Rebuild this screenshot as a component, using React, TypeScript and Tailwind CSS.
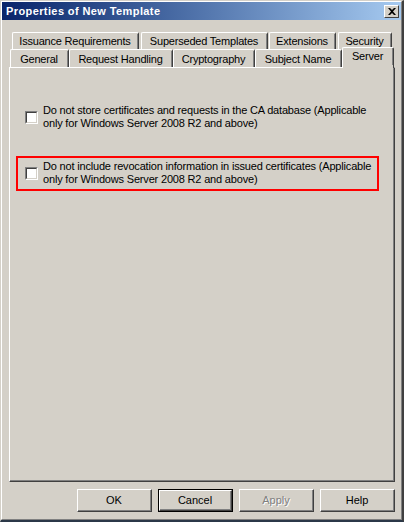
import React from 'react';

const font = { fontFamily: '"Liberation Sans", Arial, sans-serif' };

function Tab({ label, width, selected = false }: { label: string; width: string; selected?: boolean }) {
  return (
    <div
      className={`${width} ${selected ? 'relative z-10 h-[21px] mb-[-1px] pb-[3px]' : 'h-full pt-[1px]'} shrink-0 flex items-center justify-center bg-[#d4d0c8] border-t border-l border-t-white border-l-white border-r border-r-[#404040] rounded-tl-[2px] rounded-tr-[2px] text-[11px] tracking-[-0.2px] text-black whitespace-nowrap`}
    >
      <div className="h-full w-full flex items-center justify-center border-r border-r-[#808080]">{label}</div>
    </div>
  );
}

function Checkbox() {
  return (
    <div className="w-[13px] h-[13px] shrink-0 border-t border-l border-t-[#808080] border-l-[#808080] border-r border-b border-r-white border-b-white">
      <div className="w-full h-full bg-white border-t border-l border-t-[#404040] border-l-[#404040] border-r border-b border-r-[#d4d0c8] border-b-[#d4d0c8]" />
    </div>
  );
}

function Option({ line1, line2 }: { line1: string; line2: string }) {
  return (
    <div className="flex items-center gap-[5px]">
      <Checkbox />
      <div className="text-[11px] leading-[13px] tracking-[-0.18px] text-black whitespace-nowrap">
        {line1}
        <br />
        {line2}
      </div>
    </div>
  );
}

function Button({ label, isDefault = false, disabled = false }: { label: string; isDefault?: boolean; disabled?: boolean }) {
  return (
    <div className={`w-[75px] h-[23px] ${isDefault ? 'border border-black' : ''}`}>
      <div className="w-full h-full border-t border-l border-t-white border-l-white border-r border-b border-r-[#404040] border-b-[#404040]">
        <div
          className={`w-full h-full flex items-center justify-center border-r border-b border-r-[#808080] border-b-[#808080] text-[11px] ${
            disabled ? 'text-[#808080] [text-shadow:1px_1px_0_#ffffff]' : 'text-black'
          }`}
        >
          {label}
        </div>
      </div>
    </div>
  );
}

export default function App() {
  return (
    <div style={font} className="w-[404px] h-[522px] bg-[#d4d0c8] flex flex-col border-t border-l border-t-[#d4d0c8] border-l-[#d4d0c8] border-r-2 border-b-2 border-r-[#404040] border-b-[#2b3848]">
      <div className="flex-1 flex flex-col border-t border-l border-t-white border-l-white border-r border-b border-r-[#808080] border-b-[#808080]">
        {/* Title bar */}
        <div className="h-[18px] flex items-center justify-between bg-gradient-to-r from-[#0a246a] to-[#a6caf0] pl-[4px] pr-[2px]">
          <span className="text-[11px] font-bold tracking-[0.4px] text-white whitespace-nowrap">Properties of New Template</span>
          <div className="w-[15px] h-[13px] bg-[#d4d0c8] border-t border-l border-t-white border-l-white border-r border-b border-r-[#404040] border-b-[#404040] flex items-center justify-center">
            <svg width="8" height="7" viewBox="0 0 8 7">
              <path d="M0 0h2l2 2 2-2h2L5 3.5 8 7H6L4 5 2 7H0l3-3.5z" fill="#000" />
            </svg>
          </div>
        </div>

        {/* Body */}
        <div className="flex-1 flex flex-col pt-[12px] pl-[7px] pr-[6px]">
          <div className="h-[17px] flex items-stretch pl-[3px] gap-[2px]">
            <Tab label="Issuance Requirements" width="w-[127px]" />
            <Tab label="Superseded Templates" width="w-[127px]" />
            <Tab label="Extensions" width="w-[67px] -ml-[1px]" />
            <Tab label="Security" width="w-[54px]" />
          </div>
          <div className="h-[18px] flex items-end pl-[1px]">
            <Tab label="General" width="w-[59px]" />
            <Tab label="Request Handling" width="w-[104px]" />
            <Tab label="Cryptography" width="w-[82px]" />
            <Tab label="Subject Name" width="w-[87px]" />
            <Tab label="Server" width="w-[52px]" selected />
          </div>

          {/* Panel */}
          <div className="h-[415px] w-[386px] border-t border-l border-t-white border-l-white border-r border-b border-r-[#404040] border-b-[#404040]">
            <div className="h-full border-r border-b border-r-[#808080] border-b-[#808080] pt-[36px] pl-[6px] flex flex-col">
              <div className="pl-[9px]">
                <Option
                  line1="Do not store certificates and requests in the CA database (Applicable"
                  line2="only for Windows Server 2008 R2 and above)"
                />
              </div>
              <div className="mt-[26px] w-[363px] border-2 border-[#ff0000] pl-[7px] pt-[2px] pb-[3px]">
                <Option
                  line1="Do not include revocation information in issued certificates (Applicable"
                  line2="only for Windows Server 2008 R2 and above)"
                />
              </div>
            </div>
          </div>

          {/* Buttons */}
          <div className="mt-[7px] flex justify-end gap-[6px]">
            <Button label="OK" />
            <Button label="Cancel" isDefault />
            <Button label="Apply" disabled />
            <Button label="Help" />
          </div>
        </div>
      </div>
    </div>
  );
}
